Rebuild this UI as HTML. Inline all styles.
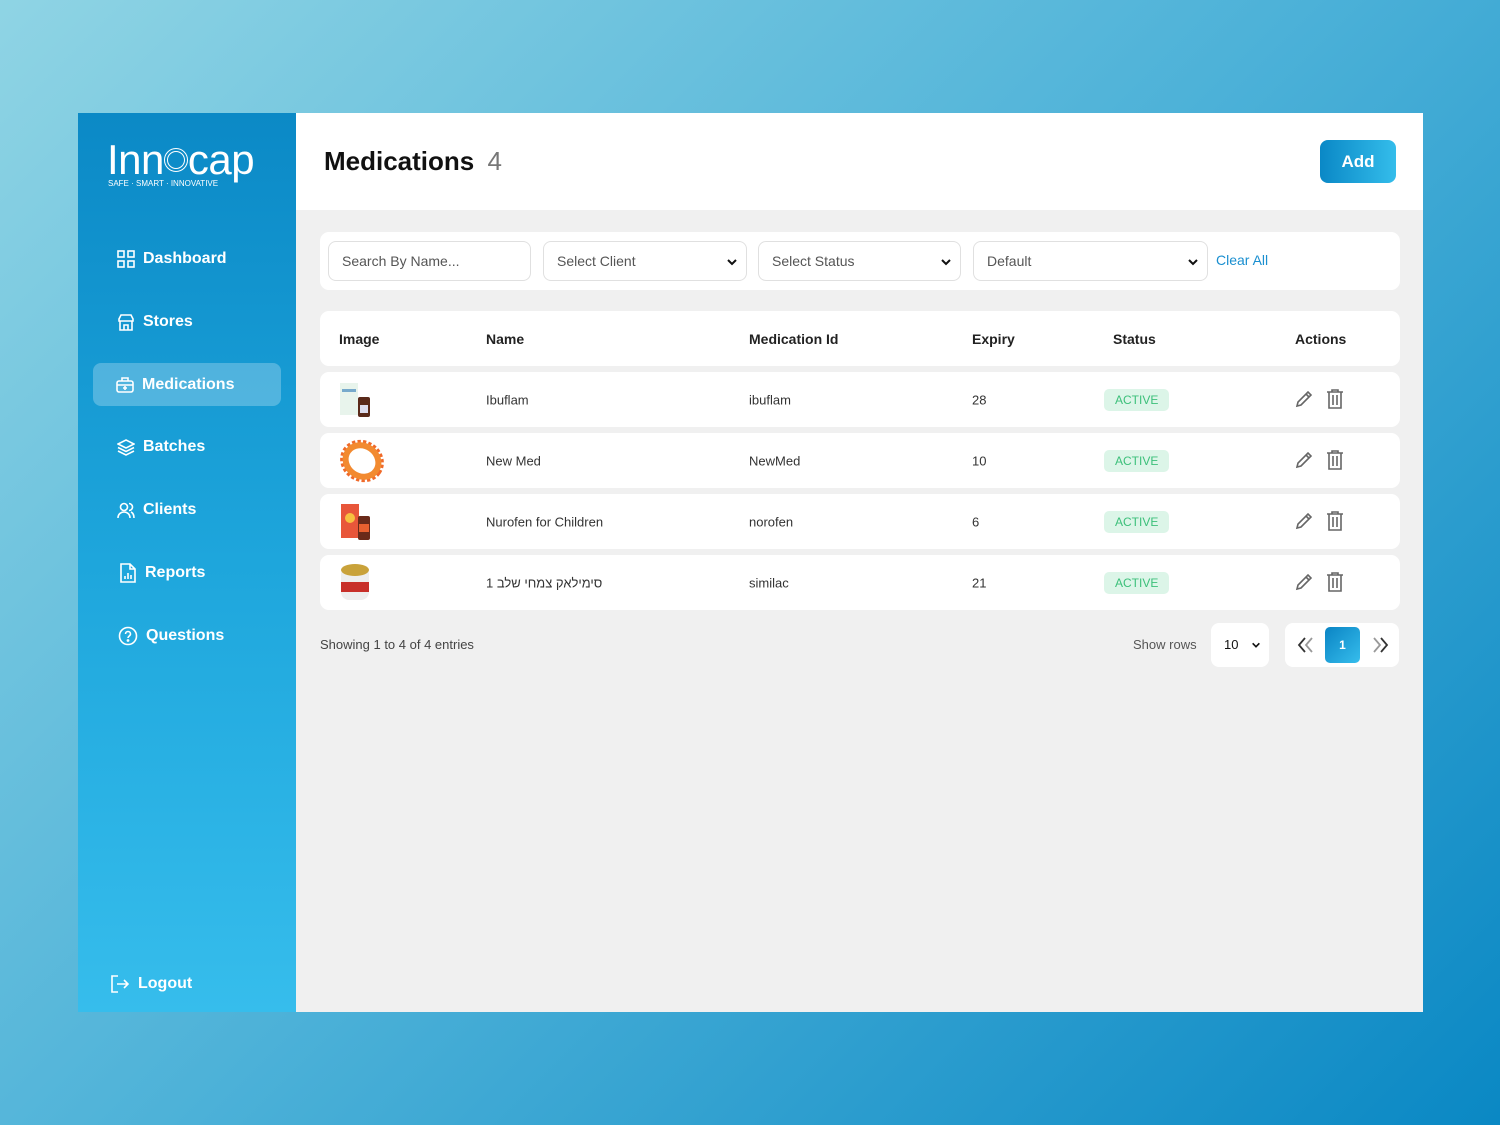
<!DOCTYPE html>
<html><head><meta charset="utf-8"><style>
*{box-sizing:border-box;margin:0;padding:0}
body{width:1500px;height:1125px;overflow:hidden;background:linear-gradient(135deg,#8fd4e4 0%,#4cb1d8 50%,#0a88c4 100%);font-family:"Liberation Sans","Noto Sans CJK SC",sans-serif;position:relative}
.abs{position:absolute}
#side{left:78px;top:113px;width:218px;height:899px;background:linear-gradient(180deg,#0b89c6 0%,#1ea6dc 50%,#36bdec 100%)}
.nav{position:absolute;left:0;width:218px;height:44px;color:#fff;font-weight:bold;font-size:16px;display:flex;align-items:center}
.nav svg{margin-right:8px}
#main{left:296px;top:113px;width:1127px;height:899px;background:#f0f0f0}
.row{position:absolute;left:320px;width:1080px;height:55px;background:#fff;border-radius:9px;font-size:13px;color:#333}
.row span{position:absolute;top:50%;transform:translateY(-50%)}
.badge{background:#dcf5e8;color:#3cc07a;border-radius:5px;padding:4px 11px;font-size:12px}
.sel{position:absolute;top:241px;height:40px;border:1px solid #e0e0e0;border-radius:8px;background:#fff;font-size:14px;color:#555;padding:0 0 0 13px;display:flex;align-items:center}
.sel .ch{position:absolute;right:8px;top:14px}
</style></head><body>
<div id="side" class="abs">
  <div class="abs" style="left:29px;top:22px;color:#fff;font-size:42px;font-weight:normal;letter-spacing:-0.5px;line-height:50px">Inn<span style="display:inline-block;width:24px;height:24px;border:4px double #fff;border-radius:50%;vertical-align:2px"></span>cap</div>
  <div class="abs" style="left:30px;top:66px;color:#fff;font-size:8px">SAFE · SMART · INNOVATIVE</div>
  <div class="nav" style="top:124px;padding-left:39px"><svg width="18" height="18" viewBox="0 0 18 18" fill="none" stroke="#fff" stroke-width="1.6"><rect x="1" y="1" width="6" height="6"/><rect x="11" y="1" width="6" height="6"/><rect x="1" y="11" width="6" height="6"/><rect x="11" y="11" width="6" height="6"/></svg>Dashboard</div>
  <div class="nav" style="top:187px;padding-left:39px"><svg width="18" height="18" viewBox="0 0 18 18" fill="none" stroke="#fff" stroke-width="1.6"><path d="M2 6l2-4h10l2 4v2H2zM3 8v9h12V8M7 17v-5h4v5"/></svg>Stores</div>
  <div class="abs" style="left:15px;top:250px;width:188px;height:43px;background:rgba(255,255,255,.25);border-radius:8px"></div>
  <div class="nav" style="top:250px;padding-left:38px"><svg width="18" height="18" viewBox="0 0 18 18" fill="none" stroke="#fff" stroke-width="1.6"><rect x="1" y="5" width="16" height="11" rx="2"/><path d="M6 5V2h6v3M1 9h16M9 10v4M7 12h4"/></svg>Medications</div>
  <div class="nav" style="top:312px;padding-left:39px"><svg width="18" height="18" viewBox="0 0 18 18" fill="none" stroke="#fff" stroke-width="1.6"><path d="M9 2l8 4-8 4-8-4zM1 9.5l8 4 8-4M1 13l8 4 8-4"/></svg>Batches</div>
  <div class="nav" style="top:375px;padding-left:39px"><svg width="18" height="18" viewBox="0 0 18 18" fill="none" stroke="#fff" stroke-width="1.6"><circle cx="7" cy="6" r="3.5"/><path d="M1 17c0-4 3-6 6-6s6 2 6 6M12 2.5a3.5 3.5 0 010 7M14 11c2 1 3 3 3 6"/></svg>Clients</div>
  <div class="nav" style="top:438px;padding-left:41px"><svg width="18" height="20" viewBox="0 0 18 20" fill="none" stroke="#fff" stroke-width="1.6"><path d="M2 1h9l5 5v13H2zM11 1v5h5M6 16v-3M9 16v-6M12 16v-4"/></svg>Reports</div>
  <div class="nav" style="top:501px;padding-left:40px"><svg width="20" height="20" viewBox="0 0 20 20" fill="none" stroke="#fff" stroke-width="1.6"><circle cx="10" cy="10" r="8.5"/><path d="M7.5 8a2.5 2.5 0 115 0c0 2-2.5 2-2.5 4"/><circle cx="10" cy="14.5" r=".6" fill="#fff"/></svg>Questions</div>
  <div class="nav" style="top:849px;padding-left:32px"><svg width="20" height="20" viewBox="0 0 20 20" fill="none" stroke="#fff" stroke-width="1.6"><path d="M8 2H2v16h6M7 10h11M14 6l4 4-4 4"/></svg>Logout</div>
</div>
<div id="main" class="abs">
  <div class="abs" style="left:0;top:0;width:1127px;height:97px;background:#fff"></div>
  <div class="abs" style="left:28px;top:33px;font-size:26px;font-weight:bold;color:#111">Medications <span style="font-weight:normal;color:#777;margin-left:6px">4</span></div>
  <div class="abs" style="left:1024px;top:27px;width:76px;height:43px;border-radius:8px;background:linear-gradient(90deg,#0a88c6,#34bdeb);color:#fff;font-size:17px;font-weight:bold;display:flex;align-items:center;justify-content:center">Add</div>
  <div class="abs" style="left:24px;top:119px;width:1080px;height:58px;background:#fff;border-radius:9px"></div>
</div>
<div class="sel" style="left:328px;width:203px;color:#555">Search By Name...</div>
<div class="sel" style="left:543px;width:204px">Select Client<svg class="ch" width="12" height="12" viewBox="0 0 12 12"><path d="M2 4l4 4 4-4" stroke="#111" stroke-width="2" fill="none"/></svg></div>
<div class="sel" style="left:758px;width:203px">Select Status<svg class="ch" width="12" height="12" viewBox="0 0 12 12"><path d="M2 4l4 4 4-4" stroke="#111" stroke-width="2" fill="none"/></svg></div>
<div class="sel" style="left:973px;width:235px">Default<svg class="ch" width="12" height="12" viewBox="0 0 12 12"><path d="M2 4l4 4 4-4" stroke="#111" stroke-width="2" fill="none"/></svg></div>
<div class="abs" style="left:1216px;top:252px;font-size:14px;color:#1a8fd0">Clear All</div>
<div class="row" style="top:311px;font-weight:bold;font-size:14px;color:#222"><span style="left:19px">Image</span><span style="left:166px">Name</span><span style="left:429px">Medication Id</span><span style="left:652px">Expiry</span><span style="left:793px">Status</span><span style="left:975px">Actions</span></div>

<div class="row" style="top:372px"><span style="left:20px;width:30px;height:38px"><svg width="32" height="38"><rect x="0" y="2" width="18" height="32" fill="#e8f4ec"/><rect x="2" y="8" width="14" height="3" fill="#7ac"/><rect x="18" y="16" width="12" height="20" rx="2" fill="#5a2a1a"/><rect x="20" y="24" width="8" height="8" fill="#dde"/></svg></span><span style="left:166px">Ibuflam</span><span style="left:429px">ibuflam</span><span style="left:652px">28</span><span class="badge" style="left:784px">ACTIVE</span></div>
<div class="row" style="top:433px"><span style="left:18px;width:48px;height:48px"><svg width="48" height="48" viewBox="0 0 48 48"><ellipse cx="24" cy="24" rx="19" ry="17" transform="rotate(35 24 24)" fill="none" stroke="#f06a2a" stroke-width="7" stroke-dasharray="3 2"/><ellipse cx="24" cy="24" rx="17" ry="15" transform="rotate(35 24 24)" fill="none" stroke="#f28a30" stroke-width="6"/></svg></span><span style="left:166px">New Med</span><span style="left:429px">NewMed</span><span style="left:652px">10</span><span class="badge" style="left:784px">ACTIVE</span></div>
<div class="row" style="top:494px"><span style="left:20px;width:32px;height:40px"><svg width="32" height="40"><rect x="1" y="2" width="18" height="34" fill="#e8563a"/><circle cx="10" cy="16" r="5" fill="#f7c040"/><rect x="18" y="14" width="12" height="24" rx="2" fill="#6a2a1a"/><rect x="19" y="22" width="10" height="8" fill="#e86030"/></svg></span><span style="left:166px">Nurofen for Children</span><span style="left:429px">norofen</span><span style="left:652px">6</span><span class="badge" style="left:784px">ACTIVE</span></div>
<div class="row" style="top:555px"><span style="left:20px;width:30px;height:42px"><svg width="30" height="42"><rect x="1" y="4" width="28" height="34" rx="8" fill="#eee"/><ellipse cx="15" cy="8" rx="14" ry="6" fill="#c9a23a"/><rect x="1" y="20" width="28" height="10" fill="#c8302a"/></svg></span><span style="left:166px" dir="rtl">סימילאק צמחי שלב 1</span><span style="left:429px">similac</span><span style="left:652px">21</span><span class="badge" style="left:784px">ACTIVE</span></div>

<div id="acts"></div>
<div class="abs" style="left:320px;top:637px;font-size:13px;color:#444">Showing 1 to 4 of 4 entries</div>
<div class="abs" style="left:1133px;top:637px;font-size:13px;color:#555">Show rows</div>
<div class="abs" style="left:1211px;top:623px;width:58px;height:44px;background:#fff;border-radius:8px;font-size:13px;color:#111;padding:14px 0 0 13px">10<svg style="position:absolute;right:8px;top:17px" width="10" height="10" viewBox="0 0 12 12"><path d="M2 4l4 4 4-4" stroke="#111" stroke-width="2" fill="none"/></svg></div>
<div class="abs" style="left:1285px;top:623px;width:114px;height:44px;background:#fff;border-radius:8px"></div>
<svg class="abs" style="left:1297px;top:637px" width="18" height="16" viewBox="0 0 18 16" fill="none" stroke-width="1.8"><path d="M8 1L2 8l6 7" stroke="#333"/><path d="M15 1L9 8l6 7" stroke="#999"/></svg>
<div class="abs" style="left:1325px;top:627px;width:35px;height:36px;border-radius:5px;background:linear-gradient(135deg,#0a84c4,#36bdec);color:#fff;font-size:12px;font-weight:bold;display:flex;align-items:center;justify-content:center">1</div>
<svg class="abs" style="left:1371px;top:637px" width="18" height="16" viewBox="0 0 18 16" fill="none" stroke-width="1.8"><path d="M3 1l6 7-6 7" stroke="#999"/><path d="M10 1l6 7-6 7" stroke="#333"/></svg>
<script>
var h='';[389,450,511,572].forEach(function(t){h+='<svg class="abs" style="left:1294px;top:'+t+'px" width="20" height="20" viewBox="0 0 20 20"><path d="M3 17l1-4L14 3l3 3L7 16z M12 5l3 3" fill="none" stroke="#666" stroke-width="1.6"/></svg><svg class="abs" style="left:1326px;top:'+t+'px" width="18" height="20" viewBox="0 0 18 20"><path d="M1 3h16M6 3V1h6v2M3 3v16h12V3M7 6v10M11 6v10" fill="none" stroke="#666" stroke-width="1.6"/></svg>'});document.getElementById('acts').outerHTML=h;
</script>
</body></html>
